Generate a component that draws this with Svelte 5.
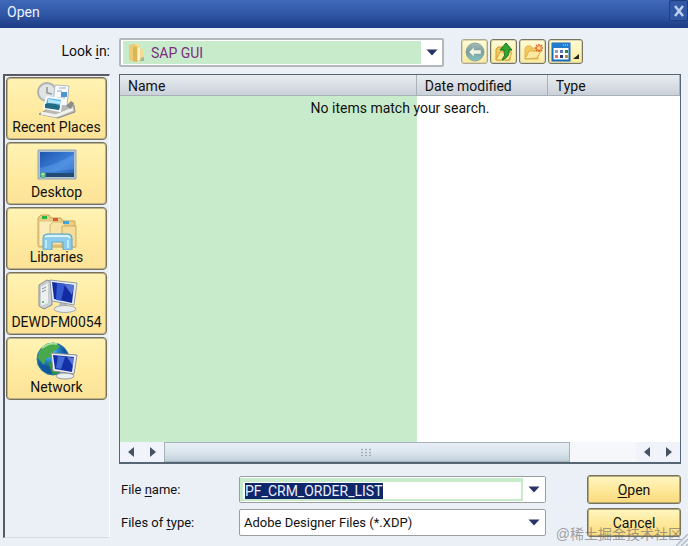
<script lang="ts">
  import { onMount } from 'svelte';

  const places = [
    { id: 'recent', label: 'Recent Places' },
    { id: 'desktop', label: 'Desktop' },
    { id: 'libraries', label: 'Libraries' },
    { id: 'computer', label: 'DEWDFM0054' },
    { id: 'network', label: 'Network' },
  ];
  const columns = ['Name', 'Date modified', 'Type'];

  let fileName = $state('PF_CRM_ORDER_LIST');
  let fileInput: HTMLInputElement;

  onMount(() => {
    fileInput.focus();
    fileInput.select();
  });
</script>

{#snippet arrow()}
  <svg class="arrow" width="12" height="7" viewBox="0 0 12 7" aria-hidden="true"><path d="M0.5 0.5h11L6 6.5z" fill="#283463" /></svg>
{/snippet}

{#snippet placeIcon(id: string)}
  <svg width="42" height="40" viewBox="0 0 42 40" aria-hidden="true">
    {#if id === 'recent'}
      <path d="M9 31L15 25 38 25 39 32 22 38 3 34z" fill="#b9b9b4" stroke="#8d8f8e" />
      <path d="M5 33L20 36 37 29" fill="none" stroke="#f1f1ee" stroke-width="3" />
      <circle cx="11" cy="12" r="9" fill="#e2e4e3" stroke="#adb1b1" stroke-width="2" />
      <path d="M11 7v6l5 1" fill="none" stroke="#8d9498" stroke-width="1.5" />
      <path d="M19 5l14 1-2 20-14-2z" fill="#f8fbff" stroke="#b4bac0" />
      <path d="M23 8h7M21 11h5M21 18h8" stroke="#9caaba" />
      <path d="M25 12h6v5h-6z" fill="#4f94d5" />
      <path d="M11 17l15 2-2 12-16-3z" fill="#49b0e2" stroke="#f4f9ff" stroke-width="2" />
      <path d="M9 24q7-3 15 2l-1 4-14-2z" fill="#236b80" />
      <path d="M12 19l12 2v3l-12-1z" fill="#b4e5fb" />
      <path d="M30 26l5-5 3 2-3 6z" fill="#8c8d88" />
    {:else if id === 'desktop'}
      <path d="M2 5h38v29H2z" fill="#b3c3cd" stroke="#93a6b2" />
      <path d="M4 7h34v25H4z" fill="url(#desk)" />
      <path d="M4 23Q20 20 38 9v15L4 28z" fill="#76b4f1" opacity=".3" />
      <path d="M4 28h34v4H4z" fill="#234c75" />
      <circle cx="7" cy="30" r="3" fill="#45ad83" />
      <path d="M5 29h4M7 28v4" stroke="#c6edb5" />
    {:else if id === 'libraries'}
      <path d="M2 36V8l3-3h8l2 3h10l2 3h12v26H3z" fill="#ebce83" stroke="#c9a457" />
      <path d="M3 11h15v25H3z" fill="#fbedb9" stroke="#dfc47d" />
      <path d="M14 15l3-3h12v23H14z" fill="#f8e4a8" stroke="#d6b86d" />
      <path d="M26 16h14v21H26z" fill="#f5dc99" stroke="#cbaa60" />
      <path d="M6 6h5v3H6z" fill="#28b747" />
      <path d="M17 8h5v3h-5z" fill="#d75745" />
      <path d="M27 11h6v3h-6z" fill="#44a5d0" />
      <path d="M7 40V28q0-4 4-4h21q4 0 4 4v12h-9v-8H16v8z" fill="#8dccea" stroke="#61a6c8" />
      <path d="M9 27q1-1 3-1h20l2 2" fill="none" stroke="#d9f5ff" stroke-width="2" />
      <path d="M10 30v8M32 30v8" stroke="#bcecff" stroke-width="2" />
    {:else if id === 'computer'}
      <path d="M3 10l8-5 5 2v23l-8 4-5-3z" fill="#c8ced3" stroke="#838d94" />
      <path d="M5 12l7-4v20l-7 3z" fill="#edf0f1" />
      <path d="M6 14l4-2M6 17l4-2" stroke="#839097" />
      <circle cx="7" cy="27" r="1" fill="#4ba954" />
      <path d="M24 27l7 1 1 7h-10z" fill="#b1b7bd" />
      <ellipse cx="29" cy="34" rx="11" ry="3.5" fill="#e8ecef" stroke="#a3a9ad" />
      <path d="M14 5l27 3-3 22-22-4z" fill="#e8edf2" stroke="#919ba7" />
      <path d="M16 7l22 3-2 18-18-4z" fill="#132ba2" />
      <path d="M21 8l8 1-4 17-5-1z" fill="#4169dc" opacity=".75" />
      <path d="M28 9l10 1-2 10z" fill="#789aec" opacity=".65" />
    {:else}
      <circle cx="17" cy="19" r="16" fill="url(#globe)" stroke="#2e7fae" />
      <path d="M3 13q5-12 17-10l4 4-6 4-2 6-6 1-2 7-6-7z" fill="#49a849" />
      <path d="M12 23l9-3 5 5-4 9-5 1z" fill="#2e963d" />
      <path d="M6 8q8-6 15-4" fill="none" stroke="#c2efb0" stroke-width="2" opacity=".8" />
      <path d="M25 29h7l1 8H23z" fill="#b5bcc1" />
      <ellipse cx="29" cy="36" rx="9" ry="3" fill="#eceff1" stroke="#949ba0" />
      <path d="M15 13l26 2-3 19-21-3z" fill="#e8edf2" stroke="#87919c" />
      <path d="M17 15l21 2-2 15-17-3z" fill="#1430a8" />
      <path d="M22 16l7 1-4 12-5-1z" fill="#547ee3" opacity=".75" />
      <path d="M31 17l7 1-1 8z" fill="#85a5ed" opacity=".6" />
    {/if}
  </svg>
{/snippet}

<svg class="defs" width="0" height="0" aria-hidden="true">
  <defs>
    <linearGradient id="desk" x1="0" y1="0" x2="1" y2="1"><stop stop-color="#1f56ae" /><stop offset=".6" stop-color="#3f83dd" /><stop offset="1" stop-color="#225daf" /></linearGradient>
    <radialGradient id="globe" cx=".35" cy=".25"><stop stop-color="#9be4fb" /><stop offset=".6" stop-color="#278bce" /><stop offset="1" stop-color="#135599" /></radialGradient>
    <linearGradient id="back" x1="0" y1="0" x2="0" y2="1"><stop stop-color="#a8bbb7" /><stop offset=".5" stop-color="#779c9e" /><stop offset="1" stop-color="#83c7c6" /></linearGradient>
  </defs>
</svg>

<main>
  <header>
    <h1>Open</h1>
    <button class="close" type="button" aria-label="Close">
      <svg width="12" height="12" viewBox="0 0 12 12"><path d="M2 1l8 10M10 1L2 11" stroke="#bed0f4" stroke-width="2.5" /></svg>
    </button>
  </header>

  <div class="look-row">
    <label for="look-in">Look <u>i</u>n:</label>
    <div class="combo look">
      <svg class="folder" width="18" height="22" viewBox="0 0 18 22" aria-hidden="true">
        <path d="M2 3l6-1v18l-6-2z" fill="#edcb70" />
        <path d="M8 2h5v4l3 2v11l-8 1z" fill="#f5dc91" />
        <path d="M6 5l4-1v16l-4-1z" fill="#d8b75c" />
        <path d="M12 6v12" stroke="#fff3c4" stroke-width="2" />
        <path d="M14 16l3-1v4h-4z" fill="#9cb79b" />
      </svg>
      <select id="look-in"><option>SAP GUI</option></select>
      {@render arrow()}
    </div>
    <div class="tools">
      <button class="tool back" type="button" aria-label="Back">
        <svg width="22" height="22" viewBox="0 0 22 22"><circle cx="11" cy="11" r="9" fill="url(#back)" stroke="#8aa5a0" /><path d="M10 6l-5 5 5 5v-3h7V9h-7z" fill="#f0f4e5" stroke="#9fb4ac" stroke-width=".6" /></svg>
      </button>
      <button class="tool" type="button" aria-label="Up one level">
        <svg width="22" height="22" viewBox="0 0 22 22"><path d="M3 19V8l2-2h5l1 2h6v11z" fill="#f2c75c" stroke="#ca9c36" /><path d="M3 19l4-8h12l-3 8z" fill="#ffe694" stroke="#d3a743" /><path d="M9 19q4-4 2-10H7l6-7 6 7h-3q1 7-7 10z" fill="#36a332" stroke="#13751f" /></svg>
      </button>
      <button class="tool" type="button" aria-label="Create new folder">
        <svg width="22" height="22" viewBox="0 0 22 22"><path d="M3 18V7l2-2h4l1 2h6v11z" fill="#f3c95d" stroke="#dcb65c" /><path d="M3 18l4-8h12l-4 7z" fill="#ffe9a0" stroke="#d9ae4a" /><path d="M17 3v8M13 7h8M14 4l6 6M20 4l-6 6" stroke="#e55b2b" stroke-width="1.5" /><circle cx="17" cy="7" r="2" fill="#ffd08a" /></svg>
      </button>
      <button class="tool view" type="button" aria-label="View menu">
        <svg width="30" height="22" viewBox="0 0 30 22"><path d="M1.5 2.500h17v17h-17z" fill="#fff" stroke="#166bbb" stroke-width="2" /><path d="M1 2h18v5H1z" fill="#237bcd" /><path d="M12 4h1M14 4h1M16 4h1" stroke="#c8e4fa" /><path d="M4 9h3v3H4z" fill="#82a4c4" /><path d="M9 9h3v3H9z" fill="#5876bd" /><path d="M14 9h3v3h-3z" fill="#278546" /><path d="M4 14h3v3H4z" fill="#dc6d5d" /><path d="M9 14h3v3H9z" fill="#27356b" /><path d="M14 14h3v3h-3z" fill="#b69236" /><path d="M28 13v5h-6z" fill="#28261d" /></svg>
      </button>
    </div>
  </div>

  <div class="body">
    <nav aria-label="Places">
      {#each places as place}
        <button class="place" type="button">
          {@render placeIcon(place.id)}
          <span>{place.label}</span>
        </button>
      {/each}
    </nav>

    <div class="content">
      <section class="list" aria-label="Files">
        <table>
          <thead>
            <tr>
              {#each columns as column}<th scope="col">{column}</th>{/each}
            </tr>
          </thead>
          <tbody>
            <tr><td class="sorted"></td><td></td><td></td></tr>
          </tbody>
        </table>
        <p class="empty">No items match your search.</p>
        <div class="scroll">
          <button type="button" aria-label="Scroll left"><svg width="6" height="10" viewBox="0 0 6 10"><path d="M6 0v10L0 5z" fill="#46535f" /></svg></button>
          <button type="button" aria-label="Scroll right"><svg width="6" height="10" viewBox="0 0 6 10"><path d="M0 0v10l6-5z" fill="#46535f" /></svg></button>
          <div class="track">
            <div class="thumb"><svg width="12" height="8" viewBox="0 0 12 8" aria-hidden="true"><path d="M0 2l2-1M4 2l2-1M8 2l2-1M0 5l2-1M4 5l2-1M8 5l2-1M0 8l2-1M4 8l2-1M8 8l2-1" stroke="#8b99a4" /></svg></div>
          </div>
          <button type="button" aria-label="Page left"><svg width="6" height="10" viewBox="0 0 6 10"><path d="M6 0v10L0 5z" fill="#46535f" /></svg></button>
          <button type="button" aria-label="Page right"><svg width="6" height="10" viewBox="0 0 6 10"><path d="M0 0v10l6-5z" fill="#46535f" /></svg></button>
        </div>
      </section>

      <form onsubmit={(e) => e.preventDefault()}>
        <label for="file-name">File <u>n</u>ame:</label>
        <div class="combo name">
          <input id="file-name" type="text" autocomplete="off" spellcheck="false" bind:value={fileName} bind:this={fileInput} />
          <button class="drop" type="button" aria-label="Recent file names">{@render arrow()}</button>
        </div>
        <button class="action" type="submit"><u>O</u>pen</button>

        <label for="file-type">Files of <u>t</u>ype:</label>
        <div class="combo type">
          <select id="file-type"><option>Adobe Designer Files (*.XDP)</option></select>
          {@render arrow()}
        </div>
        <button class="action" type="button">Cancel</button>
      </form>
    </div>
  </div>

  <span class="watermark">@稀土掘金技术社区</span>
  <svg class="grip" width="12" height="12" viewBox="0 0 12 12" aria-hidden="true"><path d="M0 12L12 0M5 12l7-7M10 12l2-2" stroke="#b4bcc5" stroke-width="1.5" /></svg>
</main>

<style>
  :global(body) { margin: 0; background: #ebf0f7; }
  main { position: relative; min-height: 100vh; box-sizing: border-box; overflow: hidden; display: flex; flex-direction: column; font: 14px/18px Roboto, "Liberation Sans", sans-serif; color: #111; background: #ebf0f7; }
  button, input, select { font: inherit; color: inherit; margin: 0; box-sizing: border-box; }
  .defs { position: absolute; }
  svg { display: block; flex: none; }
  u { text-underline-offset: 2px; }

  header { height: 28px; display: flex; align-items: flex-start; justify-content: space-between; background: linear-gradient(#4068b9, #3157a7 50%, #1c3c82); }
  h1 { margin: 0; padding: 2px 7px; font-size: 14px; line-height: 20px; font-weight: 400; color: #edf3ff; }
  .close { width: 19px; height: 21px; padding: 0; display: grid; place-items: center; border: 1px solid #203d7c; border-radius: 2px; background: #3157a5; }

  .look-row { display: grid; grid-template-columns: 110px 325px auto; column-gap: 9px; padding-top: 10px; }
  .look-row label { text-align: right; line-height: 27px; }
  .combo { position: relative; box-sizing: border-box; display: flex; align-items: center; border: 1px solid #9b9e9f; border-radius: 2px; background: #fff; min-width: 0; }
  .look { height: 29px; border-width: 2px; border-color: #b5b8ba; }
  .look .folder { position: absolute; left: 6px; }
  .look select { flex: 1; height: 23px; margin: 0 21px 0 2px; padding: 0 0 0 28px; background: #c8eccb; color: #7e2d80; }
  select { appearance: none; border: 0; outline: 0; }
  .combo > .arrow { position: absolute; right: 5px; pointer-events: none; }
  .look > .arrow { right: 4px; }

  .tools { display: flex; gap: 2px; padding: 1px 0 0 8px; }
  .tool { width: 27px; height: 25px; padding: 0; display: grid; place-items: center; border: 1px solid #77745f; border-radius: 3px; background: linear-gradient(#fffbd5, #faeb9b); box-shadow: inset 0 0 0 1px #dcd5ad; }
  .back { border-color: #aaa98f; }
  .view { width: 35px; }

  .body { flex: 1; display: grid; grid-template-columns: 107px 1fr; column-gap: 9px; padding: 7px 7px 8px 3px; }
  nav { display: flex; flex-direction: column; gap: 2px; box-sizing: border-box; padding: 1px 2px 0 1px; border: 1px solid #d7dce4; border-top: 2px solid #5a5b62; border-left: 2px solid #5a5b62; border-right: 1px solid #fff; background: #ebf0f7; }
  .place { height: 63px; padding: 2px 0 0; display: flex; flex-direction: column; align-items: center; border: 1px solid #77725c; border-radius: 4px; box-shadow: inset 0 0 0 1px #bcb188; background: linear-gradient(#fff3b4, #ffeaa0 55%, #fbe297); white-space: nowrap; }
  .place span { line-height: 18px; margin-top: -2px; }

  .content { min-width: 0; display: flex; flex-direction: column; }
  .list { position: relative; height: 390px; box-sizing: border-box; display: flex; flex-direction: column; border: 1px solid #576674; border-bottom-width: 2px; background: #fff; }
  table { flex: 1; width: 100%; table-layout: fixed; border-collapse: separate; border-spacing: 0; }
  th { height: 21px; box-sizing: border-box; padding: 2px 8px 0; text-align: left; font-weight: 400; line-height: 18px; background: linear-gradient(#e8edf1, #cbd1d8); border-right: 1px solid #a9b2ba; border-bottom: 1px solid #a7b0b6; }
  th:first-child { width: 53%; }
  th:nth-child(2) { width: 131px; }
  td { padding: 0; }
  .sorted { background: #c8eccb; }
  .empty { position: absolute; top: 24px; left: 0; right: 0; margin: 0; text-align: center; }
  .scroll { display: flex; height: 20px; background: #f5f7fb; }
  .scroll button { width: 22px; padding: 0; display: grid; place-items: center; border: 0; background: #f0f4fa; }
  .track { flex: 1; display: flex; }
  .thumb { width: 86%; box-sizing: border-box; display: grid; place-items: center; border: 1px solid #a6b1bb; background: linear-gradient(#e8eff6, #dce6ed 50%, #c2d0db); }

  form { display: grid; grid-template-columns: 108px 1fr 94px; column-gap: 10px; row-gap: 4px; align-items: center; padding: 11px 0 0 2px; }
  form label { grid-column: 1; font-size: 13px; }
  form .combo { height: 27px; margin-right: 31px; }
  .name input { flex: 1; min-width: 0; height: 23px; padding: 0 2px; border: 3px solid #c8eccb; border-width: 4px 2px 2px 3px; outline: 0; background: #fff; caret-color: transparent; }
  .name input::selection { background: #10266b; color: #e9f0ff; }
  .drop { width: 22px; height: 25px; padding: 0; display: grid; place-items: center; border: 0; background: #fff; }
  .type select { width: 100%; height: 25px; padding: 0 22px 0 4px; font-size: 13px; background: transparent; }
  .action { height: 29px; padding: 0; border: 1px solid #77735d; border-radius: 3px; box-shadow: inset 0 0 0 1px #b5a873; background: linear-gradient(#fff6c4, #fee99b 50%, #f9da7d); }

  .watermark { position: absolute; right: 6px; bottom: 2px; font: 14px/20px "Liberation Sans", "Noto Sans CJK SC", sans-serif; color: rgba(110, 110, 110, 0.65); pointer-events: none; }
  .grip { position: absolute; right: 0; bottom: 0; }
</style>
